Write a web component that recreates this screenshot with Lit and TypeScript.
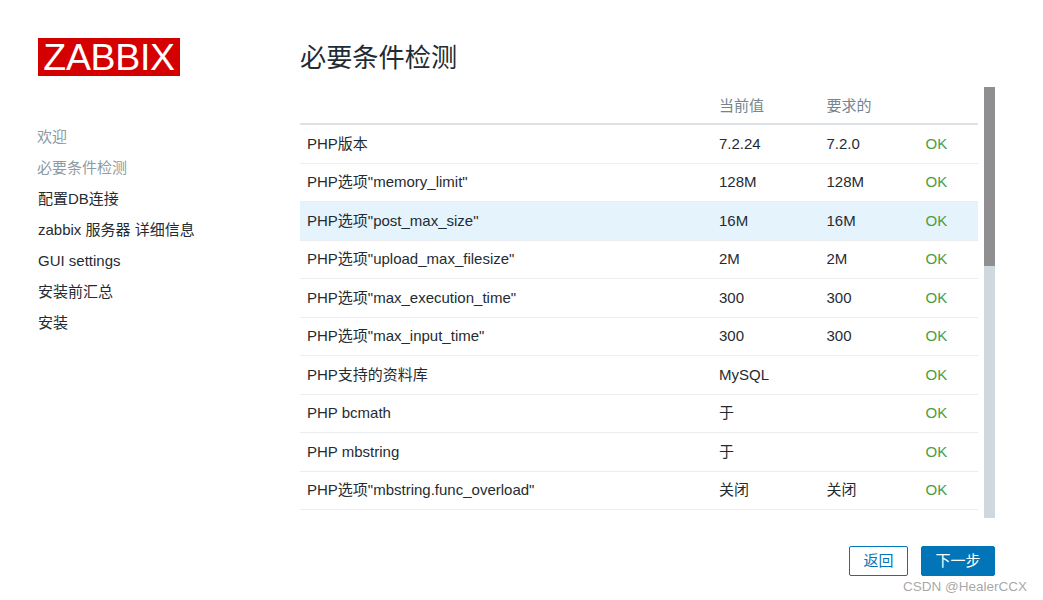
import { LitElement, html, css } from "lit";
import { customElement } from "lit/decorators.js";

const rows: [string, string, string][] = [
  ["PHP版本", "7.2.24", "7.2.0"],
  ['PHP选项"memory_limit"', "128M", "128M"],
  ['PHP选项"post_max_size"', "16M", "16M"],
  ['PHP选项"upload_max_filesize"', "2M", "2M"],
  ['PHP选项"max_execution_time"', "300", "300"],
  ['PHP选项"max_input_time"', "300", "300"],
  ["PHP支持的资料库", "MySQL", ""],
  ["PHP bcmath", "于", ""],
  ["PHP mbstring", "于", ""],
  ['PHP选项"mbstring.func_overload"', "关闭", "关闭"],
];
const steps = ["欢迎", "必要条件检测", "配置DB连接", "zabbix 服务器 详细信息", "GUI settings", "安装前汇总", "安装"];

@customElement("app-root")
export class AppRoot extends LitElement {
  static styles = css`
    :host {
      display: block;
      position: relative;
      width: 1043px;
      height: 600px;
      overflow: hidden;
      background: #fff;
      color: #1f2c33;
      font-family: "Liberation Sans", "Noto Sans CJK SC", sans-serif;
      font-size: 15px;
    }
    .page { display: flex; height: 600px; box-sizing: border-box; padding: 38px 48px 0 38px; }
    .side { width: 262px; flex: none; }
    .logo {
      width: 142px; height: 38px; background: #d40000; color: #fff;
      font-size: 37.5px; line-height: 38px; text-align: center; letter-spacing: -0.35px;
    }
    .steps { list-style: none; margin: 45px 0 0; padding: 0; }
    .steps li { height: 31px; line-height: 31px; white-space: nowrap; }
    .steps li.done { color: #8c9ba5; margin-left: -1px; }
    .main { flex: 1; display: flex; flex-direction: column; }
    h1 { margin: 0; font-weight: 400; font-size: 26.2px; line-height: 41px; color: #1f2c33; height: 49px; }
    .panel { display: flex; height: 431px; }
    .tablewrap { width: 678px; flex: none; overflow: hidden; }
    .bar { width: 11px; margin-left: 6px; background: #cfd8df; }
    .thumb { height: 179px; background: #8f8f91; }
    .head, .row {
      display: grid; grid-template-columns: 412px 107.5px 99px 1fr;
      padding-left: 7px; box-sizing: border-box;
    }
    .head { height: 38px; line-height: 37px; color: #75858f; border-bottom: 2px solid #dde2e6; }
    .row { height: 38.5px; line-height: 36.6px; border-bottom: 1px solid #ebeef0; }
    .row:nth-child(even) { line-height: 37px; }
    .row.hl { background: #e5f3fd; }
    .ok { color: #4a9e3f; }
    .actions { display: flex; justify-content: flex-end; gap: 13px; margin-top: 28px; }
    button {
      font: inherit; height: 30px; border-radius: 2px; padding: 0; box-sizing: border-box;
      border: 1px solid #0275b8; cursor: pointer; line-height: 28px;
    }
    .back { width: 59px; background: #fff; color: #0275b8; }
    .next { width: 74px; background: #0275b8; color: #fff; }
    .mark {
      position: absolute; left: 903px; top: 578px; font-size: 13.5px; line-height: 18px;
      color: rgba(110, 110, 110, 0.62); white-space: nowrap;
    }
  `;

  render() {
    return html`
      <div class="page">
        <div class="side">
          <div class="logo">ZABBIX</div>
          <ul class="steps">
            ${steps.map((s, i) => html`<li class=${i < 2 ? "done" : ""}>${s}</li>`)}
          </ul>
        </div>
        <div class="main">
          <h1>必要条件检测</h1>
          <div class="panel">
            <div class="tablewrap">
              <div class="head"><span></span><span>当前值</span><span>要求的</span><span></span></div>
              ${rows.map(
                (r, i) => html`<div class="row ${i === 2 ? "hl" : ""}">
                  <span>${r[0]}</span><span>${r[1]}</span><span>${r[2]}</span><span class="ok">OK</span>
                </div>`
              )}
            </div>
            <div class="bar"><div class="thumb"></div></div>
          </div>
          <div class="actions">
            <button class="back">返回</button>
            <button class="next">下一步</button>
          </div>
        </div>
      </div>
      <div class="mark">CSDN @HealerCCX</div>
    `;
  }
}
